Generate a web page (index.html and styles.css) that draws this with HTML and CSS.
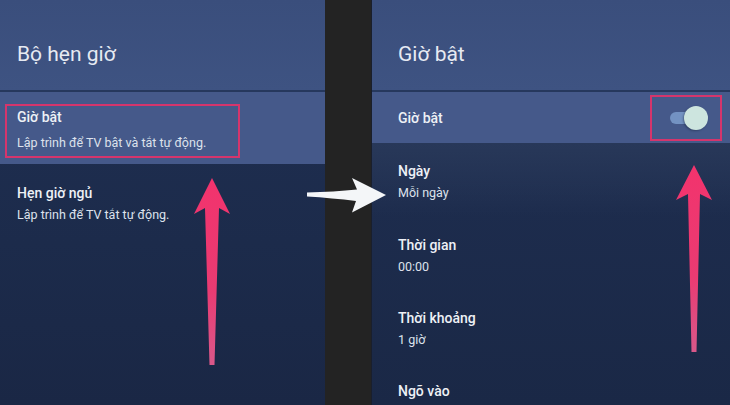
FILE: index.html
```html
<!DOCTYPE html>
<html lang="vi">
<head>
<meta charset="utf-8">
<title>Bộ hẹn giờ</title>
<link rel="stylesheet" href="styles.css">
</head>
<body>
<div class="screen">
  <section class="panel panel-left">
    <header class="panel-head"><h1 class="panel-title">Bộ hẹn giờ</h1></header>
    <div class="list">
      <div class="row row-selected">
        <div class="focus-box">
          <div class="item-title">Giờ bật</div>
          <div class="item-sub sub-wide">Lập trình để TV bật và tắt tự động.</div>
        </div>
      </div>
      <div class="row row-plain">
        <div class="item-title">Hẹn giờ ngủ</div>
        <div class="item-sub">Lập trình để TV tắt tự động.</div>
      </div>
    </div>
  </section>
  <div class="divider"></div>
  <section class="panel panel-right">
    <header class="panel-head"><h1 class="panel-title">Giờ bật</h1></header>
    <div class="list">
      <div class="row row-toggle">
        <div class="item-title">Giờ bật</div>
        <div class="toggle-box">
          <span class="switch"><span class="track"></span><span class="thumb"></span></span>
        </div>
      </div>
      <div class="row row-plain r-first">
        <div class="item-title">Ngày</div>
        <div class="item-sub">Mỗi ngày</div>
      </div>
      <div class="row row-plain">
        <div class="item-title">Thời gian</div>
        <div class="item-sub">00:00</div>
      </div>
      <div class="row row-plain">
        <div class="item-title">Thời khoảng</div>
        <div class="item-sub">1 giờ</div>
      </div>
      <div class="row row-plain">
        <div class="item-title">Ngõ vào</div>
      </div>
    </div>
  </section>
  <svg class="arrows" width="730" height="405" viewBox="0 0 730 405" aria-hidden="true">
    <defs>
      <linearGradient id="pinkGrad" x1="0" y1="0" x2="0" y2="1">
        <stop offset="0" stop-color="#f2336d"/>
        <stop offset="0.6" stop-color="#ea3b72"/>
        <stop offset="1" stop-color="#d9588a"/>
      </linearGradient>
    </defs>
    <polygon fill="url(#pinkGrad)" points="212,178 230,214 219,208 214.5,365 209.5,365 205,208 194,214"/>
    <polygon fill="url(#pinkGrad)" points="694,165 712,200 700,194 696.5,352 691.5,352 688,194 676,200"/>
    <path fill="#f4f6f8" d="M307,192.5 C325,192 342,191 357,189.5 L352,178 L386,195 L352,212.5 L356,201 C340,199 324,197.5 307,196.5 Z"/>
  </svg>
</div>
</body>
</html>
```
FILE: styles.css
```css
html, body {
  margin: 0;
  padding: 0;
  background: #222222;
}

.screen {
  position: relative;
  width: 730px;
  height: 405px;
  overflow: hidden;
  display: flex;
  font-family: Roboto, "Noto Sans", "Liberation Sans", sans-serif;
  color: #e9edf4;
}

.panel {
  display: flex;
  flex-direction: column;
  height: 405px;
}

.panel-left {
  width: 325px;
  background: linear-gradient(180deg, #203053 0%, #1c2b4b 60%, #1a2745 100%);
}

.panel-right {
  width: 358px;
  background: linear-gradient(180deg, #233356 0%, #1d2c4d 50%, #1a2846 100%);
  border-left: 1px solid #1a1f2c;
}

.divider {
  width: 46px;
  background: #232323;
}

.panel-head {
  flex: none;
  display: flex;
  align-items: center;
  background: linear-gradient(180deg, #3a4e7c 0%, #3e5382 100%);
  border-bottom: 2px solid #26385d;
  box-sizing: border-box;
  height: 92px;
}

.panel-title {
  margin: 0;
  font-weight: 400;
  font-size: 21px;
  line-height: 24px;
  color: #e6eaf2;
  padding-top: 18px;
}

.panel-left .panel-title { padding-left: 17px; }
.panel-right .panel-title { padding-left: 26px; }

.list {
  display: flex;
  flex-direction: column;
}

.item-title {
  font-size: 14px;
  font-weight: 500;
  line-height: 16px;
  color: #eef1f6;
}

.item-sub {
  font-size: 12.5px;
  line-height: 16px;
  margin-top: 6px;
  color: #dde2ec;
}

.sub-wide { margin-top: 10px; }

.row-selected {
  background: #45598a;
  padding: 12px 0 6px 5px;
}

.focus-box {
  border: 2px solid #d5356c;
  padding: 3px 0 5px 10px;
  box-sizing: border-box;
  width: 235px;
}

.row-plain {
  padding: 21px 0 15px 17px;
}

.panel-right .row-plain {
  padding-left: 26px;
  height: 73px;
  box-sizing: border-box;
}

.panel-right .r-first {
  padding-top: 20px;
  background: linear-gradient(180deg, #283859 0%, rgba(30, 45, 78, 0) 100%);
}

.row-toggle {
  height: 51px;
  background: #45598a;
  display: flex;
  align-items: center;
  justify-content: space-between;
  padding-left: 26px;
  padding-right: 8px;
  box-sizing: border-box;
}

.toggle-box {
  width: 72px;
  height: 46px;
  border: 2px solid #d5356c;
  box-sizing: border-box;
  display: flex;
  align-items: center;
  justify-content: center;
  margin-top: 1px;
}

.switch {
  position: relative;
  width: 38px;
  height: 24px;
  display: block;
  margin-left: 6px;
}

.track {
  position: absolute;
  left: 0;
  top: 6px;
  width: 30px;
  height: 12px;
  border-radius: 6px;
  background: #7392c2;
}

.thumb {
  position: absolute;
  right: 0;
  top: 0;
  width: 24px;
  height: 24px;
  border-radius: 50%;
  background: #cde5df;
  box-shadow: -1px 1px 2px rgba(20, 30, 50, 0.4);
}

.arrows {
  position: absolute;
  left: 0;
  top: 0;
  pointer-events: none;
}
```
